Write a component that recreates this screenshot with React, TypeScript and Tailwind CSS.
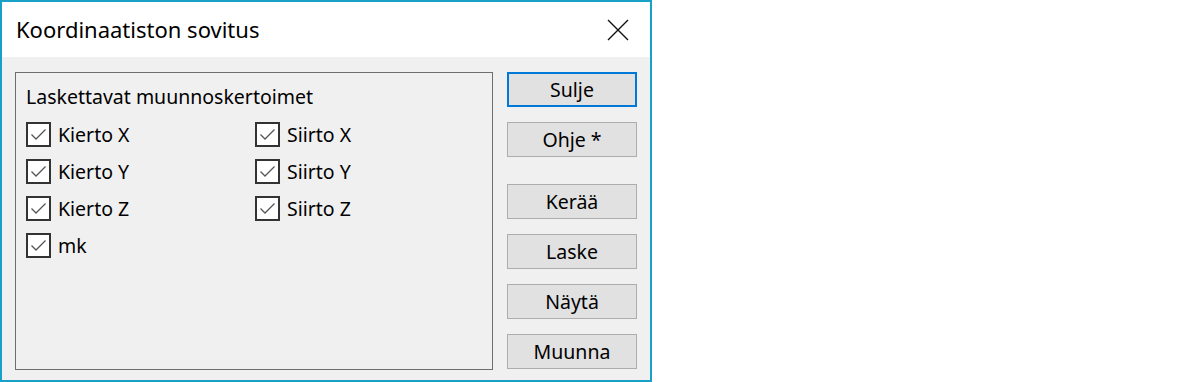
import React from "react";

const font = { fontFamily: '"Noto Sans", "Open Sans", sans-serif' };

function Check({ label }: { label: string }) {
  return (
    <div className="flex items-center h-[24px] gap-[7px]">
      <div className="w-[25px] h-[25px] border-2 border-[#333333] bg-white flex items-center justify-center">
        <svg width="17" height="13" viewBox="0 0 17 13">
          <path d="M1.5 6.5 L6 11 L15.5 1.5" fill="none" stroke="#555555" strokeWidth="1.3" />
        </svg>
      </div>
      <span className="text-[19.5px] leading-none text-black">{label}</span>
    </div>
  );
}

function Btn({ label, focused }: { label: string; focused?: boolean }) {
  return (
    <button
      className={
        "w-[130px] h-[35px] bg-[#e1e1e1] text-[19.5px] leading-none text-black flex items-center justify-center " +
        (focused ? "border-2 border-[#0078d7]" : "border border-[#adadad]")
      }
    >
      {label}
    </button>
  );
}

export default function App() {
  return (
    <div className="w-[1200px] h-[382px] bg-white" style={font}>
      <div className="w-[652px] h-[382px] border-2 border-[#18a0c6] flex flex-col">
        <div className="h-[55px] bg-white flex items-center justify-between pl-[14px] pr-[20px]">
          <span className="text-[22px] text-black">Koordinaatiston sovitus</span>
          <svg width="24" height="24" viewBox="0 0 24 24">
            <path d="M2 2 L22 22 M22 2 L2 22" stroke="#111111" strokeWidth="1.4" />
          </svg>
        </div>
        <div className="flex-1 bg-[#f0f0f0] flex pt-[15px] pl-[13px] gap-[14px]">
          <div className="w-[478px] h-[298px] border border-[#6e6e6e] pl-[10px] pt-[14px]">
            <div className="text-[19.5px] leading-none text-black">Laskettavat muunnoskertoimet</div>
            <div className="flex mt-[16px]">
              <div className="w-[229px] flex flex-col gap-[13px]">
                <Check label="Kierto X" />
                <Check label="Kierto Y" />
                <Check label="Kierto Z" />
                <Check label="mk" />
              </div>
              <div className="flex flex-col gap-[13px]">
                <Check label="Siirto X" />
                <Check label="Siirto Y" />
                <Check label="Siirto Z" />
              </div>
            </div>
          </div>
          <div className="flex flex-col">
            <Btn label="Sulje" focused />
            <div className="mt-[15px]">
              <Btn label="Ohje *" />
            </div>
            <div className="mt-[27px] flex flex-col gap-[15px]">
              <Btn label="Kerää" />
              <Btn label="Laske" />
              <Btn label="Näytä" />
              <Btn label="Muunna" />
            </div>
          </div>
        </div>
      </div>
    </div>
  );
}
